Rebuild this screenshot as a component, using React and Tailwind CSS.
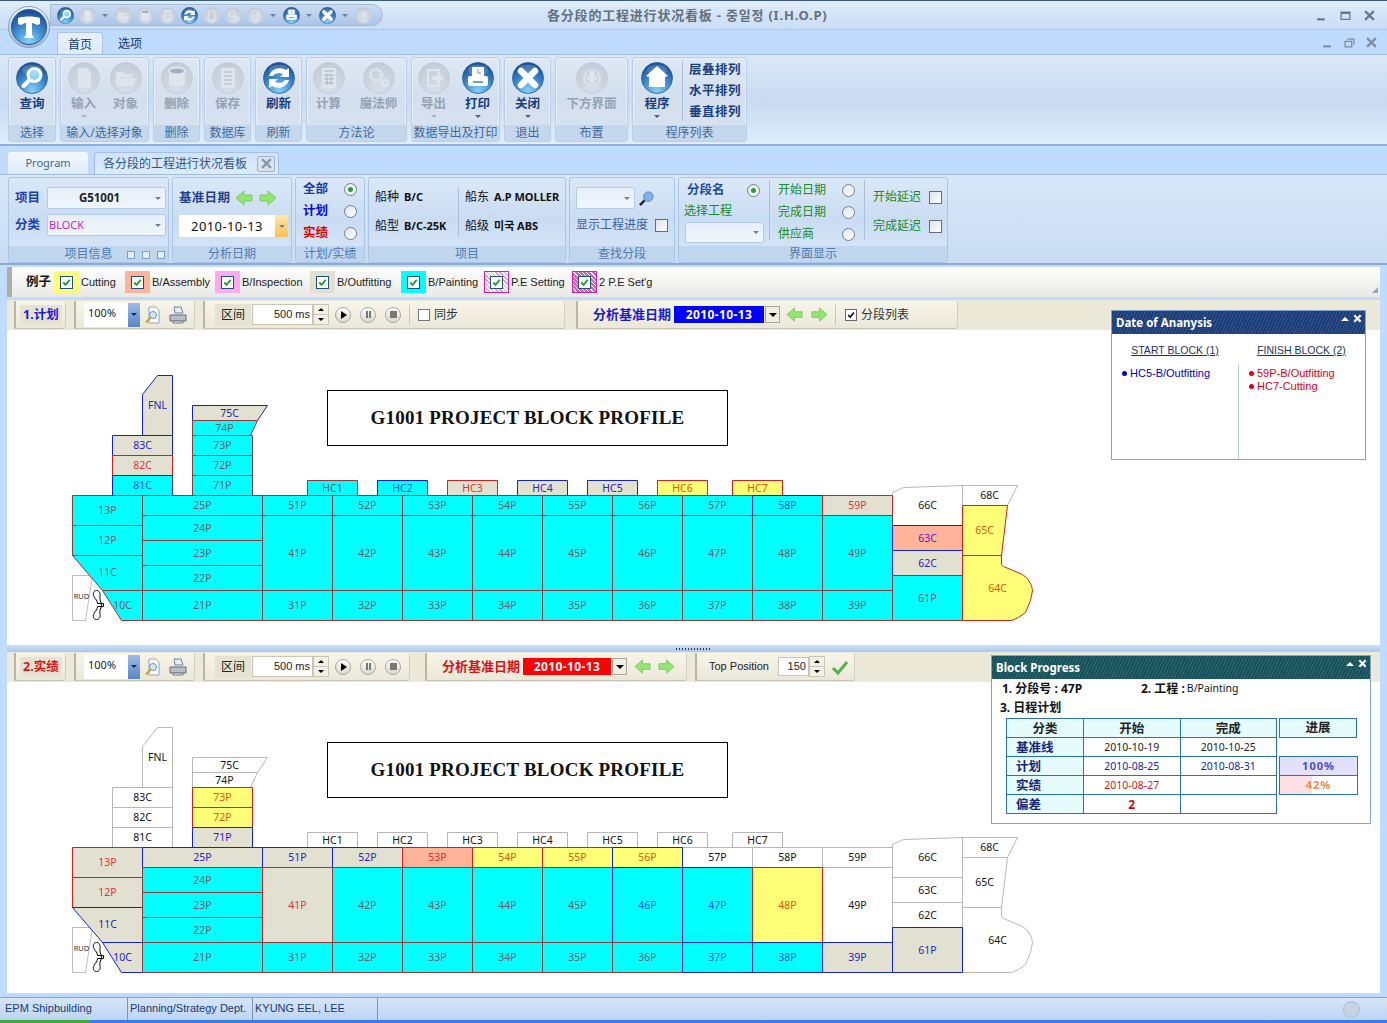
import React from "react";

const CR = { f: "#00ffff", s: "#993636", t: "#75586a" };
const CB = { f: "#00ffff", s: "#1424c8", t: "#1a55e0" };
const BR = { f: "#e2e0d0", s: "#d42020", t: "#e03535" };
const BB = { f: "#e2e0d0", s: "#1424c8", t: "#2424c0" };
const SB = { f: "#ffb399", s: "#1424c8", t: "#5a20c0" };
const SR = { f: "#ffb399", s: "#d42020", t: "#d83030" };
const YR = { f: "#ffff77", s: "#d42020", t: "#e0560f" };
const YB = { f: "#ffff77", s: "#1424c8", t: "#d06010" };
const W = { f: "#ffffff", s: "#b8b8b8", t: "#111111" };

function rect(n, x1, y1, x2, y2) {
  return { n, pts: `${x1},${y1} ${x2},${y1} ${x2},${y2} ${x1},${y2}`, x: (x1 + x2) / 2, y: (y1 + y2) / 2 };
}
function poly(n, pts, x, y) {
  return { n, pts, x, y };
}

const COLS = [262, 332, 402, 472, 542, 612, 682, 752, 822];
const BLOCKS = [
  poly("FNL", "142,394 157,375 172,375 172,435 142,435", 157, 405),
  rect("83C", 112, 435, 172, 455),
  rect("82C", 112, 455, 172, 475),
  rect("81C", 112, 475, 172, 495),
  poly("75C", "192,405 267,405 257,420 192,420", 229, 412.5),
  poly("74P", "192,420 257,420 250,435 192,435", 224, 427.5),
  rect("73P", 192, 435, 252, 455),
  rect("72P", 192, 455, 252, 475),
  rect("71P", 192, 475, 252, 495),
  rect("HC1", 307, 480, 357, 495),
  rect("HC2", 377, 480, 427, 495),
  rect("HC3", 447, 480, 497, 495),
  rect("HC4", 517, 480, 567, 495),
  rect("HC5", 587, 480, 637, 495),
  rect("HC6", 657, 480, 707, 495),
  rect("HC7", 732, 480, 782, 495),
  rect("13P", 72, 495, 142, 525),
  rect("12P", 72, 525, 142, 555),
  poly("11C", "72,555 142,555 142,590 102,590", 107, 572),
  poly("10C", "102,590 142,590 142,620 121,620", 122, 605),
  rect("25P", 142, 495, 262, 515),
  rect("24P", 142, 515, 262, 540),
  rect("23P", 142, 540, 262, 565),
  rect("22P", 142, 565, 262, 590),
  rect("21P", 142, 590, 262, 620),
  ...COLS.flatMap((x, i) => [
    rect(`5${i + 1}P`, x, 495, x + 70, 515),
    rect(`4${i + 1}P`, x, 515, x + 70, 590),
    rect(`3${i + 1}P`, x, 590, x + 70, 620),
  ]),
  poly("66C", "892,492 903,487 933,486 962,485 962,525 892,525", 927, 505),
  rect("63C", 892, 525, 962, 550),
  rect("62C", 892, 550, 962, 575),
  rect("61P", 892, 575, 962, 620),
  poly("68C", "962,485 1017,485 1007,505 962,505", 989, 495),
  poly("65C", "962,505 1007,505 1001,555 962,555", 984, 530),
  poly("64C", "962,555 1001,555 1001,564 1003,566 1022,574 1027,578 1031,585 1032,590 1030,600 1025,612 1018,617 1011,620 962,620", 997, 587.5),
];

const PLAN = {
  FNL: BB, "83C": BB, "82C": BR, "81C": CB, "75C": BB, HC2: CB, HC3: BR, HC4: BB, HC5: BB, HC6: YR, HC7: YR,
  "58P": CB, "59P": BR, "66C": W, "63C": SB, "62C": BB, "68C": W, "65C": YR, "64C": YR,
};
const ACTUAL = {
  FNL: W, "83C": W, "82C": W, "81C": W, "75C": W, "74P": W, "73P": YR, "72P": YR, "71P": BB,
  HC1: W, HC2: W, HC3: W, HC4: W, HC5: W, HC6: W, HC7: W,
  "13P": BR, "12P": BR, "11C": BB, "10C": BB, "25P": BB, "51P": BB, "41P": BR, "52P": BB, "53P": SR,
  "54P": YR, "55P": YR, "56P": YB, "46P": CB, "57P": W, "47P": CB, "37P": CB, "58P": W, "48P": YR, "38P": CB,
  "59P": W, "49P": W, "39P": BB, "66C": W, "63C": W, "62C": W, "61P": BB, "68C": W, "65C": W, "64C": W,
};

function Ship({ styles, top, height }) {
  const order = [...BLOCKS].sort((a, b) => ((styles[a.n] || CR) === W ? -1 : 0) - ((styles[b.n] || CR) === W ? -1 : 0));
  return (
    <svg viewBox={`7 ${top} 1100 ${height}`} className="block w-[1100px]" style={{ height }} >
      <g transform={`translate(0.5 ${top === 330 ? 0.5 : 352.5})`}>
        <polygon points="72,575 92,575 85,620 72,620" fill="#fff" stroke="#bdbdbd" />
        <text x="81" y="598" textAnchor="middle" fontSize="7.5" fill="#333" fontFamily="Noto Sans">RUD</text>
        {order.map((b) => {
          const st = styles[b.n] || CR;
          return <polygon key={b.n} points={b.pts} fill={st.f} stroke={st.s} />;
        })}
        {BLOCKS.map((b) => {
          const st = styles[b.n] || CR;
          return (
            <text key={b.n} x={b.x} y={b.y} dy="0.36em" textAnchor="middle" fontSize="10.5" fill={st.t} fontFamily="Noto Sans">
              {b.n}
            </text>
          );
        })}
        <path d="M96 590 C93 590 92 593 93.5 596 C95 599 97 600 97 603 H103 V606 H97 C97 609 95 610 93.5 613 C92 616 93 619 96 619 C99 619 100 616 99.5 613 C99 610 100 608 101 606 V603 C100 601 99 599 99.5 596 C100 593 99 590 96 590Z" fill="#fff" stroke="#000" />
      </g>
    </svg>
  );
}

const GLYPH = {
  search: (c) => (<g><circle cx="18.5" cy="13" r="6.5" fill="#8fd0f5" stroke={c} strokeWidth="3" /><path d="M13.5 18 L7.5 24" stroke={c} strokeWidth="4" strokeLinecap="round" /></g>),
  doc: (c) => <path d="M10 6h9l4 5v15H10z" fill={c} />,
  folder: (c) => <path d="M6 23V10h7l2 2h8v3H11L7 23zM11 16h16l-4 8H7z" fill={c} />,
  bin: (c) => (<g><path d="M8 9v12c0 5 16 5 16 0V9z" fill={c} /><ellipse cx="16" cy="9" rx="8" ry="3.5" fill="#9fb0c2" stroke={c} strokeWidth="2" /></g>),
  disk: (c) => (<g><path d="M9 6h14v20H9z" fill={c} /><path d="M12 10h8M12 14h8M12 22h8M12 18h8" stroke="#aab6c4" strokeWidth="1" /></g>),
  refresh: (c) => (<g><path d="M6 14c2-7 10-10 17-6l3-2v9h-9l3-3c-4-2-8-1-10 2z" fill={c} /><path d="M26 18c-2 7-10 10-17 6l-3 2v-9h9l-3 3c4 2 8 1 10-2z" fill={c} /></g>),
  calc: (c) => (<g><rect x="9" y="6" width="14" height="20" rx="1" fill={c} /><path d="M11 9h10M11 13h10M11 17h10M11 21h10M14 12v11M18 12v11" stroke="#aab6c4" strokeWidth="1" /></g>),
  gears: (c) => (<g><circle cx="13" cy="13" r="5.5" fill="none" stroke={c} strokeWidth="3.5" strokeDasharray="2.5 1" /><circle cx="22" cy="21" r="3" fill="none" stroke={c} strokeWidth="2.5" /></g>),
  exportt: (c) => (<g><path d="M9 7h13v5h-2V9h-9v14h9v-3h2v5H9z" fill={c} /><path d="M14 14h5v-4l7 6-7 6v-4h-5z" fill={c} /></g>),
  print: (c) => (<g><rect x="10" y="5" width="12" height="9" fill={c} /><path d="M16 7v4h3" stroke="#3f7fc0" fill="none" /><rect x="6" y="14" width="20" height="10" rx="2" fill={c} /><path d="M11 20h10" stroke="#3f7fc0" strokeWidth="1.5" /></g>),
  close: (c) => <path d="M9 9 L23 23 M23 9 L9 23" stroke={c} strokeWidth="6.5" strokeLinecap="round" />,
  down: (c) => (<g><circle cx="16" cy="16" r="8" fill="none" stroke={c} strokeWidth="1.5" /><path d="M13.5 10h5v5h3.5L16 22l-6-7h3.5z" fill={c} /></g>),
  home: (c) => <path d="M16 4 L27 14 L24 15 V25 H8 V15 L5 14 Z" fill={c} />,
};

function Orb({ kind, off, size = 32 }) {
  const c = off ? "#dfe5ec" : "#ffffff";
  return (
    <svg viewBox="0 0 32 32" width={size} height={size} className="block shrink-0">
      <circle cx="16" cy="16" r="15.5" fill={off ? "url(#orbGray)" : "url(#orbBlue)"} stroke={off ? "#c0cad6" : "#2a5f9f"} strokeWidth="0.8" />
      {GLYPH[kind](c)}
      {!off && <ellipse cx="16" cy="8" rx="10" ry="5.5" fill="#fff" opacity="0.18" />}
    </svg>
  );
}

function Caret({ className = "border-t-[#6a7f98]" }) {
  return <span className={`block w-0 h-0 border-x-[3px] border-x-transparent border-t-[3px] ${className}`} />;
}

function RibbonGroup({ w, label, children, cls = "justify-center gap-[6px]" }) {
  return (
    <div style={{ width: w }} className="flex flex-col h-[85px] rounded-[3px] border border-[#b9cfe8] bg-gradient-to-b from-[#dfe8f4] via-[#d3dfee] to-[#d9e4f2] shadow-[inset_0_0_0_1px_#e6eef8]">
      <div className={`flex-1 flex pt-[4px] min-h-0 ${cls}`}>{children}</div>
      <div className="h-[16px] bg-[#c4d7ec] text-[12px] leading-[16px] text-center text-[#3f6a9c] whitespace-nowrap rounded-b-[3px]">{label}</div>
    </div>
  );
}

function RibbonBtn({ kind, label, off, caret }) {
  return (
    <div className="flex flex-col items-center w-[36px]">
      <Orb kind={kind} off={off} />
      <div className={`mt-px text-[12.5px] leading-[18px] font-bold whitespace-nowrap ${off ? "text-[#94a2b2]" : "text-[#173f7f]"}`}>{label}</div>
      {caret && <div className="mt-[2px]"><Caret className={off ? "border-t-[#a8b4c2]" : "border-t-[#4a6080]"} /></div>}
    </div>
  );
}

function FilterGroup({ w, label, children, launchers }) {
  return (
    <div style={{ width: w }} className="relative flex flex-col h-[86px] rounded-[3px] border border-[#aac6e6] bg-gradient-to-b from-[#dbe8f8] via-[#c9dcf2] to-[#dbe8f8]">
      <div className="h-[69px] min-h-0">{children}</div>
      <div className="h-[16px] bg-[#c0d5ee] rounded-b-[3px] text-[12px] leading-[15px] text-center text-[#4d7bb0] whitespace-nowrap">{label}</div>
      {launchers && (
        <div className="absolute right-[3px] bottom-[3px] flex gap-[7px]">
          {[0, 1, 2].map((i) => <span key={i} className="block w-[8px] h-[8px] border border-[#7e9ec4] bg-[#e3edf9]" />)}
        </div>
      )}
    </div>
  );
}

function Combo({ w, h = 22, text, className = "" }) {
  return (
    <div style={{ width: w, height: h }} className="flex items-center rounded-[2px] border border-[#b3cbe6] bg-gradient-to-b from-[#e6effa] to-[#f0f6fd]">
      <div className={`flex-1 min-w-0 ${className}`}>{text}</div>
      <div className="w-[14px] flex justify-center"><Caret /></div>
    </div>
  );
}

function Radio({ on }) {
  return (
    <span className="flex items-center justify-center w-[13px] h-[13px] rounded-full border border-[#6f7f8f] bg-gradient-to-br from-[#dfe6ee] to-white shrink-0">
      {on && <span className="block w-[5px] h-[5px] rounded-full bg-[#2f9a3a]" />}
    </span>
  );
}

function Box() {
  return <span className="block w-[13px] h-[13px] border border-[#5f6f80] bg-gradient-to-br from-[#dde3ea] to-white shrink-0" />;
}

function Arrow({ left, size = 18 }) {
  return (
    <svg viewBox="0 0 18 16" width={size} height={(size * 16) / 18} className="block shrink-0">
      <path d={left ? "M1 8 L9 1 V5 H17 V11 H9 V15 Z" : "M17 8 L9 1 V5 H1 V11 H9 V15 Z"} fill="#92e56f" stroke="#6fc455" strokeWidth="0.8" />
    </svg>
  );
}

function LegendItem({ w, bg, label, hatch }) {
  return (
    <div style={{ width: w }} className="flex items-center shrink-0">
      <div className={`flex items-center justify-center w-[25px] h-[22px] ${bg} ${hatch ? "border border-[#d820a8]" : ""}`}>
        <span className="flex items-center justify-center w-[13px] h-[13px] bg-white border border-[#1c5180]">
          <svg viewBox="0 0 12 12" width="11" height="11"><path d="M2.5 6 L5 8.5 L9.5 3" fill="none" stroke="#1f9a32" strokeWidth="2" /></svg>
        </span>
      </div>
      <span className="pl-[2px] text-[11px] font-['Liberation_Sans',sans-serif] text-[#222] whitespace-nowrap">{label}</span>
    </div>
  );
}

function Seg({ w, children, className = "" }) {
  return (
    <div style={{ width: w }} className={`flex items-center h-[28px] shrink-0 rounded-br-[3px] rounded-tr-[3px] border-l-2 border-l-[#b8b6a6] border-r border-b border-r-[#d2cfbe] border-b-[#c8c5b4] bg-gradient-to-b from-[#f7f5ea] to-[#ebe8d8] ${className}`}>
      {children}
    </div>
  );
}

function ZoomIcons() {
  return (
    <div className="flex items-center gap-[6px] ml-[4px]">
      <svg viewBox="0 0 18 18" width="18" height="18" className="block">
        <path d="M5 1h7l3 3v13H5z" fill="#fff" stroke="#8aa3c4" />
        <circle cx="9" cy="9" r="3.5" fill="#d5e6f7" stroke="#6b8fc0" />
        <path d="M6.5 11.5 L2 16.5" stroke="#d49a3c" strokeWidth="2" />
      </svg>
      <svg viewBox="0 0 20 18" width="20" height="18" className="block">
        <path d="M6 1h7l2 6H7z" fill="#e6eef7" stroke="#6e8299" />
        <path d="M2 9h16v6H2z" fill="#b9bfc7" stroke="#666d76" />
        <path d="M5 15h10v2H5z" fill="#eef0f3" stroke="#777" />
      </svg>
    </div>
  );
}

function PercentCombo() {
  return (
    <div className="flex h-[24px] ml-[8px] w-[56px] bg-white">
      <span className="flex-1 pl-[4px] text-[11px] leading-[20px] text-[#222]">100%</span>
      <span className="flex items-center justify-center w-[12px] bg-gradient-to-b from-[#9fbbe4] to-[#5b84c4]"><Caret className="border-t-[#10264a]" /></span>
    </div>
  );
}

function Round({ children }) {
  return (
    <span className="flex items-center justify-center w-[16px] h-[16px] rounded-full border border-[#a7aaa6] bg-gradient-to-b from-white to-[#d9d8cc]">
      {children}
    </span>
  );
}

function Player() {
  return (
    <div className="flex items-center gap-[9px] ml-[6px]">
      <Round><span className="block w-0 h-0 ml-[2px] border-y-[4px] border-y-transparent border-l-[6px] border-l-black" /></Round>
      <Round><span className="block w-[5px] h-[7px] border-x-2 border-x-[#777]" /></Round>
      <Round><span className="block w-[7px] h-[7px] bg-[#777]" /></Round>
    </div>
  );
}

function Interval() {
  return (
    <div className="flex items-center">
      <span className="flex items-center justify-center w-[36px] h-[22px] ml-[10px] bg-[#e6e3d2] text-[12px] text-[#222]">区间</span>
      <span className="w-[61px] h-[21px] ml-[1px] bg-white border border-[#c8c6b6] text-right pr-[2px] text-[11px] font-['Liberation_Sans',sans-serif] leading-[19px] text-[#222]">500 ms</span>
      <Spinner />
    </div>
  );
}

function Spinner() {
  return (
    <span className="flex flex-col w-[16px] h-[21px] border border-[#c8c6b6] bg-[#f4f2e6]">
      <span className="flex-1 flex items-center justify-center border-b border-b-[#c8c6b6]"><span className="block w-0 h-0 border-x-[3px] border-x-transparent border-b-[3px] border-b-black" /></span>
      <span className="flex-1 flex items-center justify-center"><Caret className="border-t-black" /></span>
    </span>
  );
}

function Checked() {
  return (
    <span className="flex items-center justify-center w-[12px] h-[12px] bg-white border border-[#666] shrink-0">
      <svg viewBox="0 0 12 12" width="10" height="10"><path d="M2.5 6 L5 8.5 L9.5 3" fill="none" stroke="#000" strokeWidth="1.8" /></svg>
    </span>
  );
}

function DateBar({ labelClass, bg, w }) {
  return (
    <div className="flex items-center">
      <span className={`text-[13px] font-bold whitespace-nowrap ${labelClass}`}>分析基准日期</span>
      <span className={`ml-[3px] h-[17px] ${w} ${bg} text-white text-[12px] font-bold leading-[17px] text-center tracking-[0.4px]`}>2010-10-13</span>
      <span className="flex items-center justify-center ml-[1px] w-[15px] h-[17px] border border-[#a8a696] bg-[#f0eee2]"><span className="block w-0 h-0 border-x-[4px] border-x-transparent border-t-[4px] border-t-black" /></span>
    </div>
  );
}

function Toolbar({ children }) {
  return <div className="flex items-center h-[30px] bg-[#ece9d8] pl-[7px] gap-[8px]">{children}</div>;
}

function Canvas({ h, children }) {
  return <div style={{ height: h }} className="relative bg-white overflow-hidden">{children}</div>;
}

function ProfileTitle({ top }) {
  return (
    <div style={{ top }} className="absolute left-[320px] w-[401px] h-[56px] flex items-center justify-center border border-black bg-white font-['Liberation_Serif',serif] font-bold text-[19px] tracking-[0.2px] text-[#111]">
      G1001 PROJECT BLOCK PROFILE
    </div>
  );
}

function FloatHead({ title, tone }) {
  return (
    <div className={`flex items-start justify-between h-[23px] pl-[4px] pr-[3px] ${tone} bg-[repeating-linear-gradient(115deg,rgba(255,255,255,0.10)_0_1px,rgba(0,0,0,0.05)_1px_3px)]`}>
      <span className="text-[11.5px] font-bold leading-[23px] text-white">{title}</span>
      <span className="flex items-center gap-[4px] h-[14px] pt-[1px]">
        <span className="block w-0 h-0 border-x-[4px] border-x-transparent border-b-[4px] border-b-white" />
        <svg viewBox="0 0 10 10" width="9" height="9"><path d="M1.5 1.5 L8.5 8.5 M8.5 1.5 L1.5 8.5" stroke="#fff" strokeWidth="2.4" /></svg>
      </span>
    </div>
  );
}

function Bullet({ color, text }) {
  return (
    <div className={`flex items-center gap-[3px] text-[11px] leading-[13px] font-['Liberation_Sans',sans-serif] ${color}`}>
      <span className="block w-[5px] h-[5px] rounded-full bg-current" />
      {text}
    </div>
  );
}

const TH = "p-0 leading-[17px] border border-[#2a72b5] bg-[#e6fbfb] text-[12.5px] font-bold text-[#222]";
const TDH = "p-0 pl-[9px] leading-[17px] border border-[#2a72b5] bg-[#e6fbfb] text-[12.5px] font-bold text-[#14277a] text-left";
const TD = "p-0 leading-[17px] border border-[#2a72b5] text-[10.5px] text-center";
const HEAD = "h-[30px] pt-[9px] text-center text-[10.5px] font-['Liberation_Sans',sans-serif] underline text-[#1c3560] whitespace-nowrap";

function WinBtn({ kind, color = "#667a90" }) {
  return (
    <svg viewBox="0 0 10 10" width="11" height="11" className="block">
      {kind === "min" && <path d="M1 8.5h7" stroke={color} strokeWidth="2" />}
      {kind === "max" && <path d="M1 2h8v6.5H1z M1 3h8" fill="none" stroke={color} strokeWidth="1.2" />}
      {kind === "rest" && <path d="M1 4h6v5H1z M3 2h6v5" fill="none" stroke={color} strokeWidth="1.2" />}
      {kind === "x" && <path d="M1 1 L9 9 M9 1 L1 9" stroke={color} strokeWidth="2" />}
    </svg>
  );
}

export default function App() {
  return (
    <div className="relative flex flex-col w-[1387px] h-[1023px] overflow-hidden bg-[#bfdbff] font-['Noto_Sans','Noto_Sans_CJK_SC','Noto_Sans_CJK_KR',sans-serif]">
      <svg className="absolute w-0 h-0">
        <defs>
          <radialGradient id="orbBlue" cx="50%" cy="90%" r="85%">
            <stop offset="0%" stopColor="#86d2f6" />
            <stop offset="55%" stopColor="#3b86cc" />
            <stop offset="100%" stopColor="#174f96" />
          </radialGradient>
          <radialGradient id="orbGray" cx="50%" cy="85%" r="85%">
            <stop offset="0%" stopColor="#d6dde6" />
            <stop offset="100%" stopColor="#c2ccd8" />
          </radialGradient>
        </defs>
      </svg>

      {/* title bar */}
      <div className="relative flex items-center h-[30px] shrink-0 border-t border-t-[#3c5a80] border-b border-b-[#a9c7ea] bg-gradient-to-b from-[#e0ecfa] to-[#c9ddf6]">
        <div className="flex items-center h-[22px] w-[333px] ml-[50px] pl-[3px] rounded-r-[11px] border border-[#a6bcd6] bg-gradient-to-b from-[#cadcf2] to-[#aac5e6]">
          {[["search"], ["doc", 1, 1], ["folder", 1], ["bin", 1], ["disk", 1], ["refresh"], ["calc", 1], ["gears", 1], ["exportt", 1, 1], ["print", 0, 1], ["close", 0, 1], ["down", 1]].map(([k, off, caret]) => (
            <React.Fragment key={k}>
              <span className="flex justify-center w-[22px]"><Orb kind={k} off={!!off} size={17} /></span>
              {caret && <span className="flex justify-center w-[14px]"><Caret /></span>}
            </React.Fragment>
          ))}
        </div>
        <div className="flex-1 pl-[164px] pt-px text-[13px] font-bold tracking-[0.8px] text-[#61717f] whitespace-nowrap">各分段的工程进行状况看板 - 중일정 (I.H.O.P)</div>
        <div className="flex items-center gap-[13px] pr-[12px] pt-[1px]"><WinBtn kind="min" /><WinBtn kind="max" /><WinBtn kind="x" /></div>
      </div>

      {/* app orb, overlapping title and tab rows */}
      <div className="absolute left-[8px] top-[6px] flex items-center justify-center w-[42px] h-[42px] rounded-full bg-gradient-to-b from-[#eef3f9] to-[#a9bacd] border border-[#8a9fb8]">
        <svg viewBox="0 0 36 36" width="36" height="36" className="block">
          <circle cx="18" cy="18" r="17.5" fill="url(#orbBlue)" stroke="#1f5a9c" />
          <path d="M7 9c6-2 16-2 22 0v6l-3 1c-2-1-3-2-5-2v12l2 3h-10l2-3V14c-2 0-3 1-5 2l-3-1z" fill="#fff" />
        </svg>
      </div>

      {/* ribbon tabs */}
      <div className="flex items-end h-[24px] shrink-0 pl-[57px]">
        <div className="flex items-center justify-center w-[46px] h-[22px] pt-[2px] rounded-t-[3px] border border-b-0 border-[#a9c4e6] bg-gradient-to-b from-[#e6f0fb] to-[#dfeafa] text-[12px] text-[#15396e]">首页</div>
        <div className="flex items-center justify-center h-[22px] pt-[2px] ml-[14px] w-[26px] text-[12px] text-[#15396e] whitespace-nowrap">选项</div>
        <div className="flex-1 flex justify-end items-center self-center gap-[11px] pr-[10px]"><WinBtn kind="min" color="#7d8fa5" /><WinBtn kind="rest" color="#7d8fa5" /><WinBtn kind="x" color="#7d8fa5" /></div>
      </div>

      {/* ribbon */}
      <div className="flex gap-[4px] h-[92px] shrink-0 pl-[8px] pt-[2px] border-t border-t-[#9fbcdf] border-b-2 border-b-[#8db0db] bg-gradient-to-b from-[#dbe8f8] via-[#c8dbf2] to-[#e0edfb]">
        <RibbonGroup w={48} label="选择"><RibbonBtn kind="search" label="查询" /></RibbonGroup>
        <RibbonGroup w={89} label="输入/选择对象"><RibbonBtn kind="doc" off label="输入" caret /><RibbonBtn kind="folder" off label="对象" /></RibbonGroup>
        <RibbonGroup w={47} label="删除"><RibbonBtn kind="bin" off label="删除" /></RibbonGroup>
        <RibbonGroup w={47} label="数据库"><RibbonBtn kind="disk" off label="保存" /></RibbonGroup>
        <RibbonGroup w={47} label="刷新"><RibbonBtn kind="refresh" label="刷新" /></RibbonGroup>
        <RibbonGroup w={101} label="方法论" cls="justify-center gap-[14px] pr-[6px]"><RibbonBtn kind="calc" off label="计算" /><RibbonBtn kind="gears" off label="魔法师" /></RibbonGroup>
        <RibbonGroup w={89} label="数据导出及打印" cls="justify-center gap-[8px]"><RibbonBtn kind="exportt" off label="导出" caret /><RibbonBtn kind="print" label="打印" caret /></RibbonGroup>
        <RibbonGroup w={47} label="退出"><RibbonBtn kind="close" label="关闭" caret /></RibbonGroup>
        <RibbonGroup w={73} label="布置"><RibbonBtn kind="down" off label="下方界面" /></RibbonGroup>
        <RibbonGroup w={115} label="程序列表" cls="pl-[6px]">
          <RibbonBtn kind="home" label="程序" caret />
          <div className="flex flex-col items-center justify-between h-[60px] ml-[7px] pl-[6px] -mt-[1px] border-l border-l-[#a9bfd8] text-[12.5px] leading-[18px] tracking-[0.5px] font-bold text-[#173f7f] whitespace-nowrap">
            <span>层叠排列</span><span>水平排列</span><span>垂直排列</span>
          </div>
        </RibbonGroup>
      </div>

      {/* document tabs */}
      <div className="flex items-end gap-[6px] h-[28px] shrink-0 pl-[8px]">
        <div className="flex items-center justify-center w-[80px] h-[22px] rounded-t-[3px] bg-gradient-to-b from-[#f5f9fe] to-[#dcebfb] text-[11px] text-[#46658a]">Program</div>
        <div className="flex items-center justify-between w-[185px] h-[22px] pl-[8px] pr-[3px] rounded-t-[3px] border border-b-0 border-[#a3c0e2] bg-gradient-to-b from-[#cfe3fa] to-[#dcebfb] text-[12px] text-[#34557c] whitespace-nowrap">
          各分段的工程进行状况看板
          <span className="flex items-center justify-center w-[18px] h-[16px] border border-[#9fb5cf] bg-[#d9e3ef] rounded-[2px]"><WinBtn kind="x" color="#8a97a6" /></span>
        </div>
      </div>

      {/* filter ribbon */}
      <div className="flex gap-[3px] h-[91px] shrink-0 pl-[8px] pt-[2px] pr-[438px] border-t border-t-[#9fbcdf] border-b-2 border-b-[#8dabd0] bg-gradient-to-b from-[#d8e7f9] to-[#c9dcf3]">
        <FilterGroup w={161} label="项目信息" launchers>
          <div className="flex flex-col gap-[5px] pt-[9px] pl-[6px]">
            <div className="flex items-center">
              <span className="w-[32px] text-[12.5px] font-bold text-[#1b3fb0]">项目</span>
              <Combo w={119} text="G51001" className="text-center text-[11.5px] font-bold text-[#222]" />
            </div>
            <div className="flex items-center">
              <span className="w-[32px] text-[12.5px] font-bold text-[#1b3fb0]">分类</span>
              <Combo w={119} text="BLOCK" className="pl-[1px] text-[11px] text-[#d020d0]" />
            </div>
          </div>
        </FilterGroup>
        <FilterGroup w={120} label="分析日期">
          <div className="flex flex-col gap-[5px] pt-[8px] pl-[6px]">
            <div className="flex items-center h-[24px]">
              <span className="text-[12.5px] font-bold text-[#1f3f8c] tracking-[0.3px] whitespace-nowrap">基准日期</span>
              <span className="ml-[5px]"><Arrow left /></span>
              <span className="ml-[6px]"><Arrow /></span>
            </div>
            <div className="flex h-[22px] w-[109px]">
              <span className="flex-1 bg-white text-[13px] leading-[22px] text-center tracking-[0.4px] text-[#111]">2010-10-13</span>
              <span className="flex items-center justify-center w-[13px] bg-gradient-to-b from-[#ffe9a8] to-[#f5c04f]"><Caret /></span>
            </div>
          </div>
        </FilterGroup>
        <FilterGroup w={70} label="计划/实绩">
          <div className="flex flex-col gap-[4px] pt-[2px] pl-[7px] pr-[7px]">
            {[["全部", "text-[#1b3a9c]", true], ["计划", "text-[#0a0ae0]"], ["实绩", "text-[#e00000]"]].map(([t, c, on]) => (
              <div key={t} className="flex items-center justify-between h-[18px]">
                <span className={`text-[12.5px] font-bold ${c}`}>{t}</span>
                <Radio on={on} />
              </div>
            ))}
          </div>
        </FilterGroup>
        <FilterGroup w={198} label="项目">
          <div className="flex pt-[9px] pl-[6px] text-[#111] h-full">
            <div className="flex flex-col gap-[9px] w-[83px]">
              <div className="flex items-center h-[20px] whitespace-nowrap"><span className="text-[12px] mr-[5px]">船种</span><span className="text-[11px] font-bold">B/C</span></div>
              <div className="flex items-center h-[20px] whitespace-nowrap"><span className="text-[12px] mr-[5px]">船型</span><span className="text-[11px] font-bold">B/C-25K</span></div>
            </div>
            <div className="flex flex-col gap-[9px] pl-[6px] border-l border-l-[#a9c0da] h-[50px]">
              <div className="flex items-center h-[20px] whitespace-nowrap"><span className="text-[12px] mr-[5px]">船东</span><span className="text-[11px] font-bold">A.P MOLLER</span></div>
              <div className="flex items-center h-[20px] whitespace-nowrap"><span className="text-[12px] mr-[5px]">船级</span><span className="text-[11px] font-bold">미국 ABS</span></div>
            </div>
          </div>
        </FilterGroup>
        <FilterGroup w={106} label="查找分段">
          <div className="flex flex-col gap-[7px] pt-[9px] pl-[6px]">
            <div className="flex items-center gap-[3px]">
              <Combo w={59} text="" />
              <svg viewBox="0 0 18 18" width="17" height="17"><circle cx="11" cy="7" r="5" fill="#7fb3ee" stroke="#4f86cc" /><path d="M7 11 L2 16" stroke="#222" strokeWidth="2.5" /></svg>
            </div>
            <div className="flex items-center gap-[7px]">
              <span className="text-[12px] text-[#38639c] whitespace-nowrap">显示工程进度</span>
              <Box />
            </div>
          </div>
        </FilterGroup>
        <FilterGroup w={270} label="界面显示">
          <div className="flex pt-[2px] pl-[5px] h-full">
            <div className="flex flex-col w-[85px]">
              <div className="flex items-center justify-between h-[18px] pl-[3px] pr-[9px] mt-[1px]">
                <span className="text-[12.5px] font-bold text-[#1f4a9c] whitespace-nowrap">分段名</span>
                <Radio on />
              </div>
              <div className="h-[18px] mt-[3px] text-[12px] text-[#1a8a2a] whitespace-nowrap">选择工程</div>
              <div className="mt-[2px] pl-[1px]"><Combo w={79} h={21} text="" /></div>
            </div>
            <div className="flex flex-col gap-[4px] w-[95px] h-[60px] pl-[8px] pr-[9px] pt-[1px] border-l border-l-[#a9c0da]">
              {["开始日期", "完成日期", "供应商"].map((t) => (
                <div key={t} className="flex items-center justify-between h-[18px]">
                  <span className="text-[12px] text-[#1a8a2a] whitespace-nowrap">{t}</span>
                  <Radio />
                </div>
              ))}
            </div>
            <div className="flex flex-col gap-[9px] w-[78px] h-[60px] pl-[8px] pt-[7px] border-l border-l-[#a9c0da]">
              {["开始延迟", "完成延迟"].map((t) => (
                <div key={t} className="flex items-center gap-[8px] h-[20px]">
                  <span className="text-[12px] text-[#1a8a2a] whitespace-nowrap">{t}</span>
                  <Box />
                </div>
              ))}
            </div>
          </div>
        </FilterGroup>
      </div>

      {/* legend */}
      <div className="relative flex items-center h-[30px] shrink-0 mt-[2px] mx-[7px] pl-[14px] bg-gradient-to-b from-white to-[#e8e8e4] border-l-[5px] border-l-[#b0aea4]">
        <span className="w-[28px] text-[12.5px] font-bold text-[#111]">例子</span>
        <LegendItem w={71} bg="bg-[#ffff77]" label="Cutting" />
        <LegendItem w={90} bg="bg-[#ffb399]" label="B/Assembly" />
        <LegendItem w={95} bg="bg-[#ffaaee]" label="B/Inspection" />
        <LegendItem w={91} bg="bg-[#e2e0d0]" label="B/Outfitting" />
        <LegendItem w={83} bg="bg-[#00ffff]" label="B/Painting" />
        <LegendItem w={88} hatch bg="bg-[repeating-linear-gradient(45deg,#f090e0_0_1px,#ffffff_1px_3px)]" label="P.E Setting" />
        <LegendItem w={90} hatch bg="bg-[repeating-linear-gradient(45deg,#e060c0_0_2px,#ffffff_2px_3px)]" label="2 P.E Set'g" />
        <svg viewBox="0 0 8 8" width="8" height="8" className="absolute right-[1px] bottom-[3px]"><path d="M7 1v6H1z" fill="#8fa6c4" /></svg>
      </div>

      {/* panel 1 */}
      <div className="relative shrink-0 mt-[3px] mx-[7px]">
        <Toolbar>
          <Seg w={52}>
            <span className="ml-[4px] px-[3px] h-[20px] bg-[#e6e3d2] text-[12.5px] leading-[20px] font-bold text-[#1a20d8] whitespace-nowrap">1.计划</span>
          </Seg>
          <Seg w={121}><PercentCombo /><ZoomIcons /></Seg>
          <Seg w={362}>
            <Interval />
            <Player />
            <span className="block w-px h-[20px] bg-[#c8c6b6] ml-[8px]" />
            <span className="block w-[12px] h-[12px] ml-[8px] bg-white border border-[#777]" />
            <span className="ml-[4px] text-[12px] text-[#333]">同步</span>
          </Seg>
          <Seg w={382} className="ml-[3px]">
            <span className="ml-[15px]" />
            <DateBar labelClass="text-[#1a1ad0]" bg="bg-[#0000ff]" w="w-[90px]" />
            <span className="ml-[6px]"><Arrow left size={17} /></span>
            <span className="ml-[8px]"><Arrow size={17} /></span>
            <span className="block w-px h-[20px] bg-[#c8c6b6] ml-[7px]" />
            <span className="ml-[9px]"><Checked /></span>
            <span className="ml-[4px] text-[12px] text-[#333] whitespace-nowrap">分段列表</span>
          </Seg>
        </Toolbar>
        <Canvas h={315}>
          <Ship styles={PLAN} top={330} height={315} />
          <ProfileTitle top={60} />
        </Canvas>
        <div className="absolute left-[1104px] top-[10px] w-[255px] h-[150px] flex flex-col border border-[#7fa4cc] bg-white">
          <FloatHead title="Date of Ananysis" tone="bg-[#1d3f7e]" />
          <div className="flex-1 grid grid-cols-[126px_1fr] min-h-0">
            <div className="flex flex-col">
              <div className={HEAD}>START BLOCK (1)</div>
              <div className="pl-[10px] pt-[3px]"><Bullet color="text-[#0000c8]" text="HC5-B/Outfitting" /></div>
            </div>
            <div className="flex flex-col">
              <div className={HEAD}>FINISH BLOCK (2)</div>
              <div className="flex-1 pl-[10px] pt-[3px] border-l border-l-[#b5cbe2]">
                <Bullet color="text-[#e00012]" text="59P-B/Outfitting" />
                <Bullet color="text-[#e00012]" text="HC7-Cutting" />
              </div>
            </div>
          </div>
        </div>
      </div>

      {/* splitter */}
      <div className="flex items-center justify-center h-[7px] shrink-0 mx-[7px] bg-gradient-to-b from-[#cfe2f8] to-[#a9c8ee]">
        <span className="block w-[36px] h-[2px] bg-[repeating-linear-gradient(90deg,#334_0_1px,transparent_1px_3px)]" />
      </div>

      {/* panel 2 */}
      <div className="relative shrink-0 mx-[7px]">
        <Toolbar>
          <Seg w={52}>
            <span className="ml-[4px] px-[3px] h-[20px] bg-[#e6e3d2] text-[12.5px] leading-[20px] font-bold text-[#e01010] whitespace-nowrap">2.实绩</span>
          </Seg>
          <Seg w={121}><PercentCombo /><ZoomIcons /></Seg>
          <Seg w={207}><Interval /><Player /></Seg>
          <Seg w={262} className="ml-[7px]">
            <span className="ml-[15px]" />
            <DateBar labelClass="text-[#e01010]" bg="bg-[#ff0000]" w="w-[88px]" />
            <span className="ml-[7px]"><Arrow left size={17} /></span>
            <span className="ml-[7px]"><Arrow size={17} /></span>
          </Seg>
          <Seg w={160}>
            <span className="ml-[12px] text-[11px] font-['Liberation_Sans',sans-serif] text-[#222] whitespace-nowrap">Top Position</span>
            <span className="ml-[9px] w-[31px] h-[19px] bg-white border border-[#c8c6b6] text-right pr-[2px] text-[11px] font-['Liberation_Sans',sans-serif] leading-[17px] text-[#222]">150</span>
            <Spinner />
            <svg viewBox="0 0 18 16" width="18" height="16" className="ml-[6px]"><path d="M2 9 L7 14 L16 3" fill="none" stroke="#55b04a" strokeWidth="3" /></svg>
          </Seg>
        </Toolbar>
        <Canvas h={311}>
          <Ship styles={ACTUAL} top={682} height={311} />
          <ProfileTitle top={60} />
        </Canvas>
        <div className="absolute left-[984px] top-[3px] w-[380px] h-[169px] flex flex-col border border-[#7fa4cc] bg-white">
          <FloatHead title="Block Progress" tone="bg-[#17555f]" />
          <div className="flex flex-col text-[#111]">
            <div className="flex items-center h-[20px] pl-[10px] text-[12px] font-bold whitespace-nowrap">
              <span className="w-[139px]">1. 分段号 : 47P</span>
              <span>2. 工程 :</span>
              <span className="ml-[2px] text-[10.5px] font-normal">B/Painting</span>
            </div>
            <div className="flex items-center h-[17px] pl-[8px] text-[12px] font-bold">3. 日程计划</div>
            <div className="flex gap-[2px] pl-[14px] pt-[2px]">
              <table className="border-collapse table-fixed w-[271px]">
                <tbody>
                  <tr className="h-[19px]"><td className={`${TH} w-[77px] text-center`}>分类</td><td className={`${TH} text-center`}>开始</td><td className={`${TH} text-center`}>完成</td></tr>
                  <tr className="h-[19px]"><td className={TDH}>基准线</td><td className={`${TD} text-[#222]`}>2010-10-19</td><td className={`${TD} text-[#222]`}>2010-10-25</td></tr>
                  <tr className="h-[19px]"><td className={TDH}>计划</td><td className={`${TD} text-[#1420a8]`}>2010-08-25</td><td className={`${TD} text-[#1420a8]`}>2010-08-31</td></tr>
                  <tr className="h-[19px]"><td className={TDH}>实绩</td><td className={`${TD} text-[#d01818]`}>2010-08-27</td><td className={TD}></td></tr>
                  <tr className="h-[19px]"><td className={TDH}>偏差</td><td className={`${TD} text-[12px] font-bold text-[#e00000]`}>2</td><td className={TD}></td></tr>
                </tbody>
              </table>
              <div className="flex flex-col w-[79px]">
                <div className={`${TH} h-[20px] w-[78px] text-center leading-[18px]`}>进展</div>
                <div className="h-[18px]" />
                <div className="h-[20px] border border-[#2a72b5] bg-[#e3e0fb] text-center text-[11px] leading-[18px] tracking-[1px] font-bold text-[#4a4ad0]">100%</div>
                <div className="relative h-[20px] -mt-px border border-[#2a72b5] text-center text-[11px] leading-[18px] tracking-[1px] font-bold text-[#f08a50] bg-[linear-gradient(90deg,#fde0e6_42%,#ffffff_42%)]">42%</div>
              </div>
            </div>
          </div>
        </div>
      </div>

      {/* status bar */}
      <div className="flex flex-col mt-[4px] h-[26px] shrink-0">
        <div className="flex h-[23px] border-t border-t-[#7ea6d8] bg-gradient-to-b from-[#d6e5f8] to-[#bcd4f2] text-[11px] font-['Liberation_Sans',sans-serif] leading-[21px] text-[#173c6e] whitespace-nowrap">
          <div className="w-[128px] pl-[5px] border-r border-r-[#7d93ae]">EPM Shipbuilding</div>
          <div className="w-[125px] pl-[2px] border-r border-r-[#7d93ae]">Planning/Strategy Dept.</div>
          <div className="w-[125px] pl-[2px] border-r border-r-[#7d93ae]">KYUNG EEL, LEE</div>
          <div className="flex-1 flex justify-end items-center pr-[27px]">
            <span className="block w-[17px] h-[17px] rounded-full border border-[#aebdd0] bg-[#c6d3e3]" />
          </div>
        </div>
        <div className="flex h-[3px]">
          <div className="w-[90px] bg-[#3fa83f]" />
          <div className="flex-1 bg-[#3a7fe0]" />
        </div>
      </div>
    </div>
  );
}
